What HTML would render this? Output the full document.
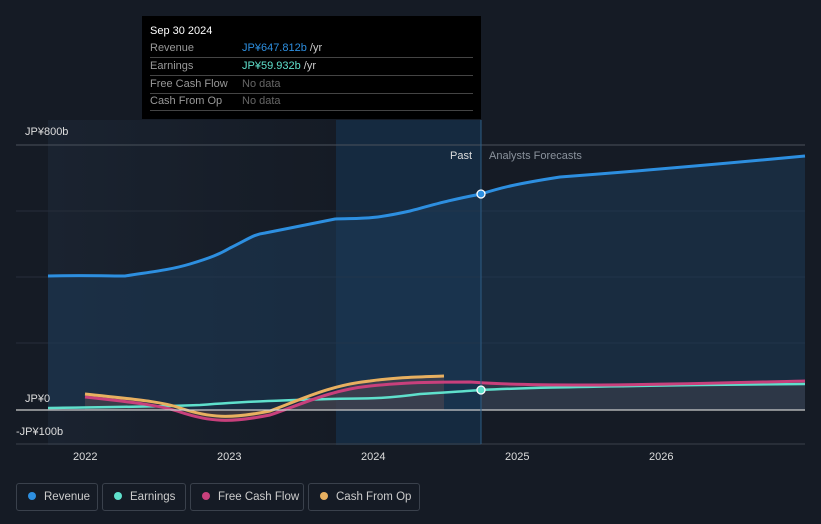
<!DOCTYPE html>
<html><head><style>
html,body{margin:0;width:821px;height:524px;background:#151b25;font-family:"Liberation Sans",sans-serif;overflow:hidden;position:relative}
.tt{position:absolute;left:142px;top:16px;width:339px;height:103px;background:#000;color:#fff;font-size:11px}
.tt .r{position:absolute;left:8px;right:8px;height:17px;border-bottom:1px solid #444;line-height:17px;color:#999}
.tt .r span{position:absolute;left:92px}
.leg{position:absolute;top:483px;height:28px;border:1px solid #3a414c;border-radius:3px;color:#ccc;font-size:11.5px;line-height:26px;box-sizing:border-box;white-space:nowrap}
.leg i{display:inline-block;width:8px;height:8px;border-radius:50%;margin:0 8px 0 11px;vertical-align:0}
.ax{position:absolute;color:#ddd;font-size:11px;white-space:nowrap}
</style></head><body>
<svg width="821" height="524" style="position:absolute;left:0;top:0">
<defs><linearGradient id="g" x1="0" x2="1"><stop offset="0" stop-color="#1a2330"/><stop offset="1" stop-color="#151b25"/></linearGradient></defs>
<rect x="48" y="120" width="288" height="325" fill="url(#g)"/>
<rect x="336" y="120" width="145" height="325" fill="#152a40"/>
<g stroke="#262e3a" stroke-width="1"><line x1="16" y1="211" x2="805" y2="211"/><line x1="16" y1="277" x2="805" y2="277"/><line x1="16" y1="343" x2="805" y2="343"/></g>
<line x1="16" y1="145" x2="805" y2="145" stroke="#4a525c"/>
<path d="M48,276 C80,275 110,276 125,276 C150,272 170,270 190,264 C210,258 220,254 230,248 C250,238 255,234 265,233 C290,228 300,226 335,219 C360,218 370,220 410,211 C440,203 450,200 481,194 C500,188 515,184 560,177 C640,171 720,164 805,156 L805,410 L48,410Z" fill="#1d3a58" opacity="0.55"/>
<path d="M48,276 C80,275 110,276 125,276 C150,272 170,270 190,264 C210,258 220,254 230,248 C250,238 255,234 265,233 C290,228 300,226 335,219 C360,218 370,220 410,211 C440,203 450,200 481,194 C500,188 515,184 560,177 C640,171 720,164 805,156" fill="none" stroke="#2d8fe0" stroke-width="3"/>
<path d="M85,397 C130,402 160,405 180,412 C210,422 230,423 270,415 C300,405 330,390 370,381 C400,377 420,377 444,376 L444,410 L85,410Z" fill="#5a4a50" opacity="0.5"/>
<path d="M481,384 C520,385 700,384 805,381 L805,410 L481,410Z" fill="#3a3f4c" opacity="0.6"/>
<path d="M48,408 C100,407 150,407 200,405 C240,402 260,401 330,399 C360,398 375,400 420,394 C450,392 470,391 481,390 C520,388 560,387 700,385 L805,384" fill="none" stroke="#5fe0cc" stroke-width="2.5"/>
<path d="M85,397 C130,402 160,405 180,412 C210,422 230,423 270,415 C300,405 330,390 370,386 C400,383 420,382 470,382 C500,384 520,385 600,385 C700,384 760,382 805,381" fill="none" stroke="#c8407c" stroke-width="3"/>
<path d="M85,394 C130,399 160,401 180,408 C210,418 230,419 270,411 C300,400 330,385 370,381 C400,377 420,377 444,376" fill="none" stroke="#e8b060" stroke-width="3"/>
<line x1="16" y1="410" x2="805" y2="410" stroke="#ccc" stroke-width="1.2"/>
<line x1="16" y1="444" x2="805" y2="444" stroke="#3a414c"/>
<line x1="481" y1="120" x2="481" y2="444" stroke="#2d5d85"/>
<circle cx="481" cy="194" r="4" fill="#2d8fe0" stroke="#fff" stroke-width="1.3"/>
<circle cx="481" cy="390" r="4" fill="#5fe0cc" stroke="#fff" stroke-width="1.3"/>
</svg>
<div class="ax" style="left:25px;top:126px">JP¥800b</div>
<div class="ax" style="left:25px;top:393px">JP¥0</div>
<div class="ax" style="left:16px;top:426px">-JP¥100b</div>
<div class="ax" style="left:450px;top:150px">Past</div>
<div class="ax" style="left:489px;top:150px;color:#8a929c">Analysts Forecasts</div>
<div class="ax" style="left:73px;top:451px">2022</div>
<div class="ax" style="left:217px;top:451px">2023</div>
<div class="ax" style="left:361px;top:451px">2024</div>
<div class="ax" style="left:505px;top:451px">2025</div>
<div class="ax" style="left:649px;top:451px">2026</div>
<div class="tt">
<div style="position:absolute;left:8px;top:9px;font-size:11px">Sep 30 2024</div>
<div class="r" style="top:24px">Revenue<span style="color:#2d8fe0">JP¥647.812b <b style="color:#ccc;font-weight:normal">/yr</b></span></div>
<div class="r" style="top:42px">Earnings<span style="color:#5fe0cc">JP¥59.932b <b style="color:#ccc;font-weight:normal">/yr</b></span></div>
<div class="r" style="top:60px">Free Cash Flow<span style="color:#666">No data</span></div>
<div class="r" style="top:77px">Cash From Op<span style="color:#666">No data</span></div>
</div>
<div class="leg" style="left:16px;width:82px"><i style="background:#2d8fe0"></i>Revenue</div>
<div class="leg" style="left:102px;width:84px"><i style="background:#5fe0cc"></i>Earnings</div>
<div class="leg" style="left:190px;width:114px"><i style="background:#c8407c"></i>Free Cash Flow</div>
<div class="leg" style="left:308px;width:112px"><i style="background:#e8b060"></i>Cash From Op</div>
</body></html>
